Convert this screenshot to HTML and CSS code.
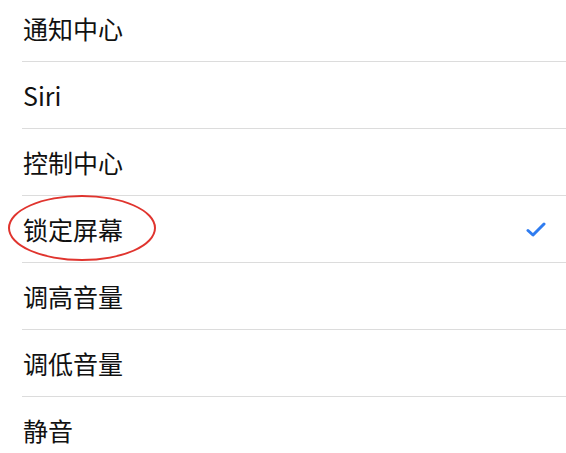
FILE: index.html
```html
<!DOCTYPE html>
<html lang="zh-CN">
<head>
    <meta charset="UTF-8">
    <meta name="viewport" content="width=device-width, initial-scale=1.0">
    <title>快捷方式</title>
    <link rel="stylesheet" href="styles.css">
</head>
<body>
    <ul class="settings-list">
        <li class="settings-row">通知中心</li>
        <li class="settings-row">Siri</li>
        <li class="settings-row">控制中心</li>
        <li class="settings-row is-selected">
            <span class="row-label">锁定屏幕</span>
            <span class="circle-mark"></span>
            <svg class="check" width="20" height="15" viewBox="0 0 20 15">
                <path d="M2 8.5 L7 13 L18 2" fill="none" stroke="#2f7cf0" stroke-width="3" stroke-linecap="round" stroke-linejoin="round"/>
            </svg>
        </li>
        <li class="settings-row">调高音量</li>
        <li class="settings-row">调低音量</li>
        <li class="settings-row">静音</li>
    </ul>
</body>
</html>
```

FILE: styles.css
```css
body {
    margin: 0;
    background-color: #fff;
    font-family: "Noto Sans CJK SC", "Noto Sans", sans-serif;
    color: #111;
    overflow: hidden;
}

.settings-list {
    list-style: none;
    margin: -5px 0 0 0;
    padding: 0 0 0 22px;
}

.settings-row {
    position: relative;
    display: flex;
    align-items: center;
    justify-content: space-between;
    height: 66px;
    padding: 0 20px 0 1px;
    font-size: 25px;
    border-bottom: 1px solid #dcdcdc;
}

.circle-mark {
    position: absolute;
    left: -14px;
    top: -1px;
    width: 144px;
    height: 62px;
    border: 2.5px solid #e0342e;
    border-radius: 50%;
}

.check {
    display: block;
}
```
